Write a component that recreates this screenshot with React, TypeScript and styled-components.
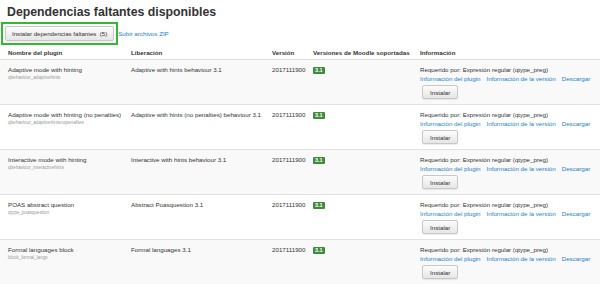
import React from 'react';
import styled, { createGlobalStyle } from 'styled-components';

interface IPlugin {
    name: string;
    component: string;
    release: string;
    version: string;
    moodle: string;
}

const plugins: IPlugin[] = [
    { name: 'Adaptive mode with hinting', component: 'qbehaviour_adaptivehints', release: 'Adaptive with hints behaviour 3.1', version: '2017111900', moodle: '3.1' },
    { name: 'Adaptive mode with hinting (no penalties)', component: 'qbehaviour_adaptivehintsnopenalties', release: 'Adaptive with hints (no penalties) behaviour 3.1', version: '2017111900', moodle: '3.1' },
    { name: 'Interactive mode with hinting', component: 'qbehaviour_interactivehints', release: 'Interactive with hints behaviour 3.1', version: '2017111900', moodle: '3.1' },
    { name: 'POAS abstract question', component: 'qtype_poasquestion', release: 'Abstract Poasquestion 3.1', version: '2017111900', moodle: '3.1' },
    { name: 'Formal languages block', component: 'block_formal_langs', release: 'Formal languages 3.1', version: '2017111900', moodle: '3.1' },
];

const App = (): JSX.Element => {
    return (
        <>
            <GlobalStyle />
            <SPage>
                <STitle>Dependencias faltantes disponibles</STitle>
                <SToolbar>
                    <SHighlight>
                        <SButton type="button">Instalar dependencias faltantes&nbsp; (5)</SButton>
                    </SHighlight>
                    <SLink href="#">Subir archivos ZIP</SLink>
                </SToolbar>
                <STable>
                    <SHeadRow>
                        <SHeadCell>Nombre del plugin</SHeadCell>
                        <SHeadCell>Liberación</SHeadCell>
                        <SHeadCell>Versión</SHeadCell>
                        <SHeadCell>Versiones de Moodle soportadas</SHeadCell>
                        <SHeadCell>Información</SHeadCell>
                    </SHeadRow>
                    {plugins.map((p, i) => (
                        <SRow key={p.component} striped={i % 2 === 0}>
                            <SCell>
                                <div>{p.name}</div>
                                <SComponent>{p.component}</SComponent>
                            </SCell>
                            <SCell>{p.release}</SCell>
                            <SCell>{p.version}</SCell>
                            <SCell>
                                <SBadge>{p.moodle}</SBadge>
                            </SCell>
                            <SCell>
                                <div>Requerido por: Expresión regular (qtype_preg)</div>
                                <SLinks>
                                    <SLink href="#">Información del plugin</SLink>
                                    <SLink href="#">Información de la versión</SLink>
                                    <SLink href="#">Descargar</SLink>
                                </SLinks>
                                <SSmallButton type="button">Instalar</SSmallButton>
                            </SCell>
                        </SRow>
                    ))}
                </STable>
            </SPage>
        </>
    );
};

const GlobalStyle = createGlobalStyle`
    body {
        margin: 0;
        background: #fff;
        font-family: "Liberation Sans", Arial, sans-serif;
        color: #333;
    }
`;

const SPage = styled.div`
    width: 600px;
    height: 284px;
    overflow: hidden;
`;

const STitle = styled.h2`
    margin: 0;
    padding: 4px 0 0 7px;
    font-size: 12.3px;
    line-height: 16px;
    font-weight: bold;
    color: #333;
`;

const SToolbar = styled.div`
    display: flex;
    align-items: center;
    margin-top: 2px;
    padding-left: 1px;
`;

const SHighlight = styled.div`
    border: 2px solid #33b833;
    padding: 2px 2px;
    display: flex;
`;

const SButton = styled.button`
    font-family: "Liberation Sans", Arial, sans-serif;
    font-size: 6.1px;
    color: #333;
    height: 15px;
    padding: 0 6px;
    border: 1px solid #c8c8c8;
    border-radius: 2px;
    background: linear-gradient(#fcfcfc, #e6e6e6);
    box-shadow: 0 1px 1px rgba(0, 0, 0, 0.08);
    white-space: nowrap;
`;

const SLink = styled.a`
    color: #1a7fc7;
    text-decoration: none;
    font-size: 6.2px;
`;

const STable = styled.div`
    margin-top: 0;
`;

const SHeadRow = styled.div`
    display: grid;
    grid-template-columns: 123px 141px 41px 107px 1fr;
    padding: 0 0 0 8px;
    height: 14px;
    align-items: center;
    border-bottom: 1px solid #ddd;
`;

const SHeadCell = styled.div`
    font-size: 6.2px;
    font-weight: bold;
    color: #333;
    white-space: nowrap;
`;

const SRow = styled.div<{ striped: boolean }>`
    display: grid;
    grid-template-columns: 123px 141px 41px 107px 1fr;
    padding: 5px 0 0 8px;
    height: 45px;
    box-sizing: border-box;
    border-bottom: 1px solid #e2e2e2;
    background: ${(props) => (props.striped ? '#f9f9f9' : '#fff')};
`;

const SCell = styled.div`
    font-size: 6.2px;
    line-height: 9px;
    color: #333;
    white-space: nowrap;
`;

const SComponent = styled.div`
    font-size: 4.6px;
    line-height: 8px;
    color: #999;
`;

const SBadge = styled.span`
    display: inline-block;
    margin-top: 1px;
    padding: 0 2px;
    height: 7px;
    line-height: 7px;
    font-size: 5.5px;
    font-weight: bold;
    color: #fff;
    background: #3f8a3f;
    border-radius: 1px;
`;

const SLinks = styled.div`
    display: flex;
    gap: 6px;
`;

const SSmallButton = styled.button`
    display: block;
    margin: 2px 0 0 2px;
    height: 14px;
    padding: 0 7px;
    font-family: "Liberation Sans", Arial, sans-serif;
    font-size: 6.2px;
    color: #333;
    border: 1px solid #c8c8c8;
    border-radius: 2px;
    background: linear-gradient(#fcfcfc, #e6e6e6);
    box-shadow: 0 1px 1px rgba(0, 0, 0, 0.08);
`;

export default App;
